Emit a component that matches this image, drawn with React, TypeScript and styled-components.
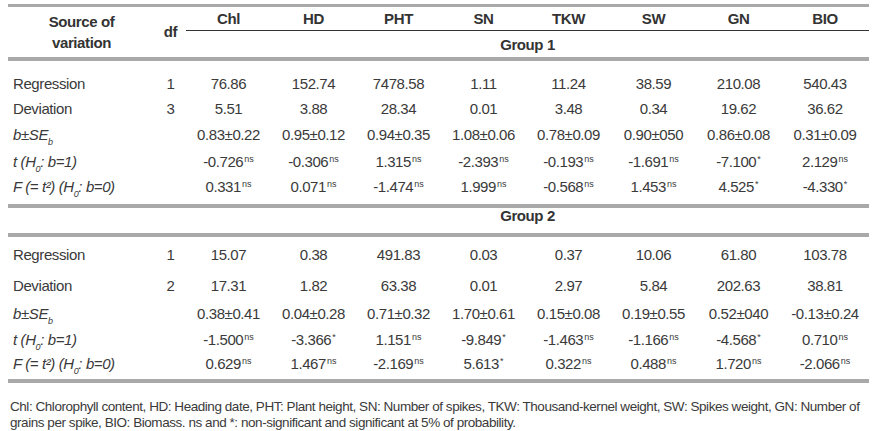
import React from 'react';
import styled, { createGlobalStyle } from 'styled-components';

const GlobalStyle = createGlobalStyle`
  html, body {
    margin: 0;
    padding: 0;
    background: #ffffff;
  }
  body {
    font-family: "Liberation Sans", Arial, sans-serif;
    color: #3a3a3a;
  }
`;

const Page = styled.div`
  width: 877px;
  height: 431px;
  padding: 4px 8px 0 8px;
  box-sizing: border-box;
  overflow: hidden;
`;

const Table = styled.table`
  width: 861px;
  border-collapse: collapse;
  table-layout: fixed;
  font-size: 15px;
  letter-spacing: -0.4px;
  border-top: 3px solid #a9a9a9;
`;

const HeadRow = styled.tr<{ $h: number; $rule?: boolean }>`
  height: ${p => p.$h}px;
  ${p => (p.$rule ? 'border-bottom: 4px solid #a9a9a9;' : '')}
`;

const HeadCell = styled.th<{ $line?: boolean; $padTop?: number; $padBottom?: number; $lh?: number }>`
  font-weight: bold;
  font-size: 15px;
  color: #333;
  text-align: center;
  vertical-align: middle;
  padding: ${p => p.$padTop ?? 0}px 0 ${p => p.$padBottom ?? 0}px 0;
  line-height: ${p => p.$lh ?? 21}px;
  ${p => (p.$line ? 'border-bottom: 1px solid #333;' : '')}
`;

const Row = styled.tr<{ $h: number; $rule?: boolean }>`
  height: ${p => p.$h}px;
  ${p => (p.$rule ? 'border-bottom: 4px solid #a9a9a9;' : '')}
`;

const LabelCell = styled.td<{ $italic?: boolean; $padTop?: number; $padBottom?: number }>`
  text-align: left;
  padding: ${p => p.$padTop ?? 0}px 0 ${p => p.$padBottom ?? 0}px 5px;
  font-style: ${p => (p.$italic ? 'italic' : 'normal')};
  white-space: nowrap;
  vertical-align: middle;
`;

const Cell = styled.td<{ $padTop?: number; $padBottom?: number }>`
  text-align: center;
  padding: ${p => p.$padTop ?? 0}px 0 ${p => p.$padBottom ?? 0}px 0;
  white-space: nowrap;
  vertical-align: middle;
`;

const Sup = styled.sup`
  font-size: 9px;
  vertical-align: 5px;
  line-height: 0;
  margin-left: 1px;
  letter-spacing: 0;
`;

const Sub = styled.sub`
  font-size: 9px;
  vertical-align: -5px;
  line-height: 0;
`;

const Footnote = styled.p`
  margin: 16px 0 0 2px;
  font-size: 13.5px;
  letter-spacing: -0.45px;
  line-height: 16px;
  white-space: nowrap;
  color: #3a3a3a;
`;

const cols = ['Chl', 'HD', 'PHT', 'SN', 'TKW', 'SW', 'GN', 'BIO'];

type Stat = [string, string];

interface Group {
  name: string;
  df: [string, string];
  regression: string[];
  deviation: string[];
  bse: string[];
  t: Stat[];
  f: Stat[];
}

const groups: Group[] = [
  {
    name: 'Group 1',
    df: ['1', '3'],
    regression: ['76.86', '152.74', '7478.58', '1.11', '11.24', '38.59', '210.08', '540.43'],
    deviation: ['5.51', '3.88', '28.34', '0.01', '3.48', '0.34', '19.62', '36.62'],
    bse: ['0.83±0.22', '0.95±0.12', '0.94±0.35', '1.08±0.06', '0.78±0.09', '0.90±050', '0.86±0.08', '0.31±0.09'],
    t: [
      ['-0.726', 'ns'], ['-0.306', 'ns'], ['1.315', 'ns'], ['-2.393', 'ns'],
      ['-0.193', 'ns'], ['-1.691', 'ns'], ['-7.100', '*'], ['2.129', 'ns'],
    ],
    f: [
      ['0.331', 'ns'], ['0.071', 'ns'], ['-1.474', 'ns'], ['1.999', 'ns'],
      ['-0.568', 'ns'], ['1.453', 'ns'], ['4.525', '*'], ['-4.330', '*'],
    ],
  },
  {
    name: 'Group 2',
    df: ['1', '2'],
    regression: ['15.07', '0.38', '491.83', '0.03', '0.37', '10.06', '61.80', '103.78'],
    deviation: ['17.31', '1.82', '63.38', '0.01', '2.97', '5.84', '202.63', '38.81'],
    bse: ['0.38±0.41', '0.04±0.28', '0.71±0.32', '1.70±0.61', '0.15±0.08', '0.19±0.55', '0.52±040', '-0.13±0.24'],
    t: [
      ['-1.500', 'ns'], ['-3.366', '*'], ['1.151', 'ns'], ['-9.849', '*'],
      ['-1.463', 'ns'], ['-1.166', 'ns'], ['-4.568', '*'], ['0.710', 'ns'],
    ],
    f: [
      ['0.629', 'ns'], ['1.467', 'ns'], ['-2.169', 'ns'], ['5.613', '*'],
      ['0.322', 'ns'], ['0.488', 'ns'], ['1.720', 'ns'], ['-2.066', 'ns'],
    ],
  },
];

// row spacing differs a little between the two groups in the original
const spacing = {
  first: { regH: 37, regTop: 13, regBottom: 2, devH: 25, bH: 27, tH: 28, fH: 30, fBottom: 6 },
  second: { regH: 37, regTop: 7, regBottom: 6, devH: 28, bH: 27, tH: 26, fH: 28, fBottom: 4 },
};

const StatValue: React.FC<{ s: Stat }> = ({ s }) => (
  <>
    {s[0]}
    <Sup>{s[1]}</Sup>
  </>
);

const GroupBody: React.FC<{ g: Group; first: boolean }> = ({ g, first }) => {
  const sp = first ? spacing.first : spacing.second;
  return (
    <tbody>
      {!first && (
        <Row $h={29} $rule>
          <td />
          <td />
          <HeadCell colSpan={8} $padBottom={9} $lh={16}>
            {g.name}
          </HeadCell>
        </Row>
      )}
      <Row $h={sp.regH}>
        <LabelCell $padTop={sp.regTop} $padBottom={sp.regBottom}>
          Regression
        </LabelCell>
        <Cell $padTop={sp.regTop} $padBottom={sp.regBottom}>
          {g.df[0]}
        </Cell>
        {g.regression.map((v, i) => (
          <Cell key={i} $padTop={sp.regTop} $padBottom={sp.regBottom}>
            {v}
          </Cell>
        ))}
      </Row>
      <Row $h={sp.devH}>
        <LabelCell>Deviation</LabelCell>
        <Cell>{g.df[1]}</Cell>
        {g.deviation.map((v, i) => (
          <Cell key={i}>{v}</Cell>
        ))}
      </Row>
      <Row $h={sp.bH}>
        <LabelCell $italic>
          b±SE<Sub>b</Sub>
        </LabelCell>
        <Cell />
        {g.bse.map((v, i) => (
          <Cell key={i}>{v}</Cell>
        ))}
      </Row>
      <Row $h={sp.tH}>
        <LabelCell $italic>
          t (H<Sub>0</Sub>: b=1)
        </LabelCell>
        <Cell />
        {g.t.map((s, i) => (
          <Cell key={i}>
            <StatValue s={s} />
          </Cell>
        ))}
      </Row>
      <Row $h={sp.fH} $rule>
        <LabelCell $italic $padBottom={sp.fBottom}>
          F (= t²) (H<Sub>0</Sub>: b=0)
        </LabelCell>
        <Cell $padBottom={sp.fBottom} />
        {g.f.map((s, i) => (
          <Cell key={i} $padBottom={sp.fBottom}>
            <StatValue s={s} />
          </Cell>
        ))}
      </Row>
    </tbody>
  );
};

export default function App() {
  return (
    <Page>
      <GlobalStyle />
      <Table>
        <colgroup>
          <col style={{ width: 147 }} />
          <col style={{ width: 31 }} />
          {cols.map((c, i) => (
            <col key={c} style={{ width: i === cols.length - 1 ? 88 : 85 }} />
          ))}
        </colgroup>
        <thead>
          <HeadRow $h={25}>
            <HeadCell rowSpan={2}>
              Source of
              <br />
              variation
            </HeadCell>
            <HeadCell rowSpan={2}>df</HeadCell>
            {cols.map(c => (
              <HeadCell key={c} $line>
                {c}
              </HeadCell>
            ))}
          </HeadRow>
          <HeadRow $h={28} $rule>
            <HeadCell colSpan={8} $padTop={2}>
              {groups[0].name}
            </HeadCell>
          </HeadRow>
        </thead>
        {groups.map((g, i) => (
          <GroupBody key={g.name} g={g} first={i === 0} />
        ))}
      </Table>
      <Footnote>
        Chl: Chlorophyll content, HD: Heading date, PHT: Plant height, SN: Number of spikes, TKW: Thousand-kernel
        weight, SW: Spikes weight, GN: Number of
        <br />
        grains per spike, BIO: Biomass. ns and *: non-significant and significant at 5% of probability.
      </Footnote>
    </Page>
  );
}
